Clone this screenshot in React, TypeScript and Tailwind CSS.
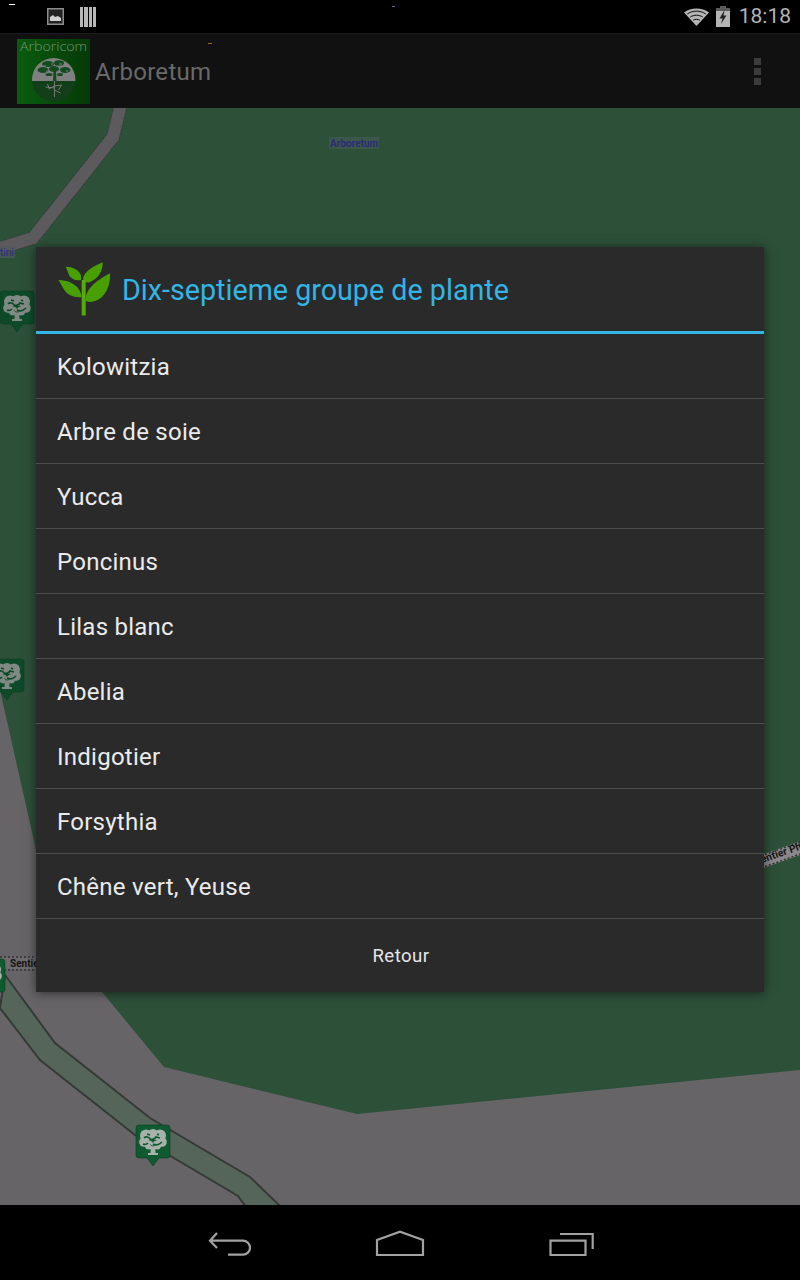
const PLANTS = [
  'Kolowitzia',
  'Arbre de soie',
  'Yucca',
  'Poncinus',
  'Lilas blanc',
  'Abelia',
  'Indigotier',
  'Forsythia',
  'Chêne vert, Yeuse',
];

function Marker({ x, y, fill, tree }: { x: number; y: number; fill: string; tree: string }) {
  return (
    <g transform={`translate(${x} ${y})`}>
      <path d="M3 0h28a3 3 0 0 1 3 3v27a3 3 0 0 1-3 3h-8l-6 8-6-8H3a3 3 0 0 1-3-3V3a3 3 0 0 1 3-3z" fill={fill} stroke="#0a3d20" strokeWidth="0.6" />
      <g fill={tree}>
        <circle cx="10" cy="10.500" r="6" />
        <circle cx="17" cy="9.500" r="5.500" />
        <circle cx="24" cy="10.500" r="6" />
        <circle cx="8" cy="17" r="4.800" />
        <circle cx="26" cy="17" r="4.800" />
        <circle cx="13" cy="20" r="4.500" />
        <circle cx="21" cy="20" r="4.500" />
        <path d="M15 20h4l.5 8h2.500v2H12v-2h2.500z" />
      </g>
      <path d="M8 13c2-2 5-1 6 1 2 1 5 0 6-2l4 1M7 19c2 1 4 0 5-1m5 1c2 1 5 2 9-2M11 9l3 1m7-1 2 1" stroke={fill} strokeWidth="1.700" fill="none" />
      <path d="M14.500 19.500c1 2 4 2 5 0" stroke={fill} strokeWidth="1" fill="none" />
    </g>
  );
}

function MapLayer() {
  return (
    <svg className="absolute inset-0" width="800" height="1097" viewBox="0 108 800 1097">
      <rect x="0" y="108" width="800" height="1097" fill="#2d5039" />
      <path d="M0 690 36 850 102 992 164 1067 357 1114 800 1070V1205H0Z" fill="#676468" />
      <path d="M122 100 113 137 33 238 0 248" fill="none" stroke="#3c3a3d" strokeWidth="14" strokeDasharray="2 2" />
      <path d="M122 100 113 137 33 238 0 248" fill="none" stroke="#5d5a5e" strokeWidth="12" />
      <path d="M5 975 55 1043 150 1118 250 1177 281 1207H246L238 1196 135 1135 40 1060 0 1008Z" fill="#56655a" stroke="#343b36" strokeWidth="2" />
      <path d="M0 963H40" stroke="#6e6b6f" strokeWidth="13" />
      <path d="M0 957H40M0 970H40" stroke="#333" strokeWidth="1.500" strokeDasharray="2 2" />
      <path d="M750 866 800 848" stroke="#8b888c" strokeWidth="13" />
      <path d="M750 860 800 842M750 872 800 854" stroke="#333" strokeWidth="1.500" strokeDasharray="2 2" />
      <text x="762" y="863" transform="rotate(-19 762 863)" fontSize="10.500" fontWeight="700" fill="#151515" fontFamily="Roboto, sans-serif">entier Ph</text>
      <text x="10" y="967" fontSize="10" fontWeight="700" fill="#151515" fontFamily="Roboto, sans-serif">Sentier</text>
      <rect x="329" y="137" width="50" height="12" fill="#55606a" opacity="0.35" />
      <text x="330" y="147" fontSize="10" fontWeight="700" fill="#2f2c78" fontFamily="Roboto, sans-serif">Arboretum</text>
      <rect x="0" y="247" width="15" height="11" fill="#4f5a5c" opacity="0.7" />
      <text x="0" y="256" fontSize="10" fill="#2a2a80" fontFamily="Roboto, sans-serif">tini</text>
      <Marker x={0} y={291} fill="#0e4a29" tree="#808a84" />
      <Marker x={-10} y={659} fill="#0e4a29" tree="#808a84" />
      <Marker x={-29} y={959} fill="#0f5a30" tree="#a8b2ab" />
      <Marker x={136} y={1125} fill="#0f5a30" tree="#a8b2ab" />
    </svg>
  );
}

function Logo() {
  return (
    <svg width="73" height="65" viewBox="17 38 73 65" className="shrink-0">
      <defs>
        <linearGradient id="logoBg" x1="0" x2="1" y1="0" y2="0">
          <stop offset="0" stopColor="#0a5c10" />
          <stop offset="1" stopColor="#053a06" />
        </linearGradient>
        <clipPath id="logoDisc">
          <circle cx="53.700" cy="78.700" r="21.700" />
        </clipPath>
      </defs>
      <rect x="17" y="38" width="73" height="65" fill="url(#logoBg)" />
      <text x="20" y="50" fontSize="13" fontWeight="300" fill="#7a907a" fontFamily="'Open Sans', sans-serif" textLength="67" lengthAdjust="spacingAndGlyphs">Arboricom</text>
      <g clipPath="url(#logoDisc)">
        <rect x="30" y="55" width="48" height="25" fill="#808080" />
        <rect x="30" y="80" width="48" height="22" fill="#123f1a" />
        <g fill="#134a1f">
          <ellipse cx="48" cy="63" rx="6" ry="3" />
          <ellipse cx="59" cy="62" rx="5" ry="2.800" />
          <ellipse cx="43" cy="69" rx="5.500" ry="3" />
          <ellipse cx="54" cy="68" rx="5" ry="3" />
          <ellipse cx="65" cy="69" rx="5.500" ry="3" />
          <ellipse cx="49" cy="73.500" rx="3.500" ry="1.500" />
          <ellipse cx="60" cy="73.500" rx="3" ry="1.500" />
          <path d="M53.500 70h2.500l.5 10h-3.500z" />
        </g>
        <path d="M43 65h3m5-2h2m6 0h3M46 70h3m10 0h2m5 0h2" stroke="#808080" strokeWidth="1" fill="none" />
        <path d="M54.500 80v16m0-11-6 3m6 1 6 3m-6-7 7-1m-7 3-9-1m2-3 2 5m12-4-3 5" stroke="#808080" strokeWidth="0.900" fill="none" />
      </g>
    </svg>
  );
}

function PlantIcon() {
  return (
    <svg width="54" height="58" viewBox="57 260 54 58" className="shrink-0">
      <path d="M83 279c1-8 11-13 19.700-16.700C103 271 98 279 90 282c-3 1-5 1-7-3z" fill="#48a000" />
      <path d="M86 301c-2-10 9-20 24-27.700 1 12-5 24-14 27.500-4 1.500-7 1.500-10 .2z" fill="#48a000" />
      <path d="M81.700 297c-7 1-15-2-18-8-2-3-3-6-5.400-9 9 0 18 4 21 10 1 2 2 4 2.400 7z" fill="#48a000" />
      <path d="M81 280c-5 1-10-1-12-5-1-3-2-5-3.300-8.300 7 0 13 3 15 8 .5 2 .5 3 .3 5.300z" fill="#48a000" />
      <path d="M81.700 280h4v35.500h-4z" fill="#56aa08" />
    </svg>
  );
}

function WifiIcon() {
  return (
    <svg width="25" height="18" viewBox="0 0 26 20" preserveAspectRatio="none">
      <path d="M0 5C7-1 19-1 26 5L13 20Z" fill="#b4b4b4" />
      <path d="M3.500 6.500C9 2.500 17 2.500 22.500 6.500M6.500 10c4-2.600 9-2.600 13 0M9.500 13.500c2-1.200 5-1.200 7 0" stroke="#000" strokeWidth="1" fill="none" />
    </svg>
  );
}

function BatteryIcon() {
  return (
    <svg width="14" height="21" viewBox="0 0 14 21">
      <path d="M4 0h6v2H4z" fill="#5a5a5a" />
      <path d="M0 2h14v19H0z" fill="#b4b4b4" />
      <path d="M0 2h14v3H0z" fill="#5a5a5a" />
      <path d="M8.500 4 3.500 12.500h3L5 18l5.500-8.500h-3z" fill="#222" />
    </svg>
  );
}

function NavIcons() {
  return (
    <div className="h-[75px] bg-black flex items-center shrink-0">
      <svg width="800" height="75" viewBox="0 1205 800 75" fill="none" stroke="#a2a2a2" strokeWidth="2.200">
        <path d="M217 1233 210 1240.700 217 1248M210 1240.700H243a7 7 0 0 1 0 14H228" />
        <path d="M377 1255V1240L400 1231.700 423 1240V1255Z" />
        <path d="M550.500 1240.700H585.500V1255H550.500Z" />
        <path d="M560 1234H592.700V1249" />
      </svg>
    </div>
  );
}

export default function App() {
  return (
    <div className="w-[800px] h-[1280px] flex flex-col overflow-hidden bg-black font-['Roboto',sans-serif]">
      {/* Status bar */}
      <div className="relative h-[33px] bg-black flex items-center shrink-0 pl-[47px] pr-[9px]">
        <span className="absolute left-[9px] top-[4px] w-[6px] h-px bg-white" />
        <span className="absolute left-[392px] top-[6px] w-[3px] h-px bg-[#6a6aa8]" />
        <svg width="17" height="17" viewBox="0 0 17 17">
          <rect x="0.750" y="0.750" width="15.500" height="15.500" fill="#222" stroke="#8c8c8c" strokeWidth="1.500" />
          <path d="M3 13V9l3-2 2 2 3-1 3 2v3z" fill="#d0d0d0" />
        </svg>
        <div className="ml-[16px] flex gap-[1px] w-[16px] h-[20px]">
          <span className="flex-1 bg-[#b8b8b8]" />
          <span className="flex-1 bg-[#b8b8b8]" />
          <span className="flex-1 bg-[#b8b8b8]" />
          <span className="flex-1 bg-[#b8b8b8]" />
        </div>
        <div className="ml-auto flex items-center">
          <WifiIcon />
          <div className="ml-[7px]">
            <BatteryIcon />
          </div>
          <span className="ml-[9px] text-[21px] leading-none text-[#b4b4b4]">18:18</span>
        </div>
      </div>

      {/* Action bar */}
      <div className="relative h-[75px] bg-[#111111] border-t border-[#1c1c1c] flex items-center shrink-0 pl-[17px] pr-[39px]">
        <Logo />
        <span className="ml-[5px] pt-[2px] text-[24px] tracking-[0.3px] text-[#696969]">Arboretum</span>
        <span className="absolute left-[208px] top-[9px] w-[4px] h-px bg-[#a06a20]" />
        <div className="ml-auto flex flex-col gap-[3px]">
          <span className="w-[7px] h-[7px] bg-[#3c3c3c]" />
          <span className="w-[7px] h-[7px] bg-[#3c3c3c]" />
          <span className="w-[7px] h-[7px] bg-[#3c3c3c]" />
        </div>
      </div>

      {/* Map with the dialog over it */}
      <div className="relative flex-1">
        <MapLayer />
        <div className="absolute left-[36px] top-[139px] w-[728px] bg-[#2a2a2a] shadow-[0_1px_10px_rgba(0,0,0,0.55)]">
          <div className="h-[84px] flex items-center pl-[21px] gap-[11px]">
            <PlantIcon />
            <span className="pt-[2px] text-[28.700px] leading-none text-[#33b5e5]">Dix-septieme groupe de plante</span>
          </div>
          <div className="h-[3px] bg-[#33b5e5]" />
          {PLANTS.map((name) => (
            <div
              key={name}
              className="h-[65px] flex items-center pl-[21px] pt-[2px] border-b border-[#4d4d4d] text-[24px] tracking-[0.25px] text-[#ebebeb]"
            >
              {name}
            </div>
          ))}
          <div className="h-[73px] flex items-center justify-center pl-[2px] pt-[2px] text-[18.600px] tracking-[0.45px] text-[#e6e6e6]">
            Retour
          </div>
        </div>
      </div>

      <NavIcons />
    </div>
  );
}
